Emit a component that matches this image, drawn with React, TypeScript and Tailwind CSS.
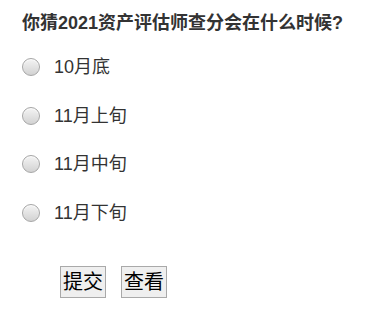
const options = ['10月底', '11月上旬', '11月中旬', '11月下旬'];

function RadioDot() {
  return (
    <span className="block h-[18px] w-[18px] shrink-0 rounded-full border border-[#a6a6a6] bg-gradient-to-b from-[#f4f4f4] to-[#d2d2d2] shadow-[inset_0_1px_1px_rgba(255,255,255,0.8)]" />
  );
}

export default function App() {
  return (
    <div
      className="w-[385px] h-[324px] bg-white text-[#333]"
      style={{ fontFamily: '"Liberation Sans", "Noto Sans CJK SC", sans-serif' }}
    >
      <div className="px-[22px] pt-[11px] text-[18px] font-bold leading-[24px] text-[#333]">
        你猜2021资产评估师查分会在什么时候?
      </div>
      <div className="mt-[8px] flex flex-col px-[22px]">
        {options.map((opt) => (
          <label key={opt} className="flex h-[48.5px] items-center">
            <RadioDot />
            <span className="ml-[14px] text-[18px] leading-[24px] text-[#333]">{opt}</span>
          </label>
        ))}
      </div>
      <div className="mt-[29px] flex gap-[15px] pl-[60px]">
        <button className="h-[32px] w-[46px] border border-[#a9a9a9] bg-[#efefef] text-[20px] leading-[30px] text-black">
          提交
        </button>
        <button className="h-[32px] w-[46px] border border-[#a9a9a9] bg-[#efefef] text-[20px] leading-[30px] text-black">
          查看
        </button>
      </div>
    </div>
  );
}
